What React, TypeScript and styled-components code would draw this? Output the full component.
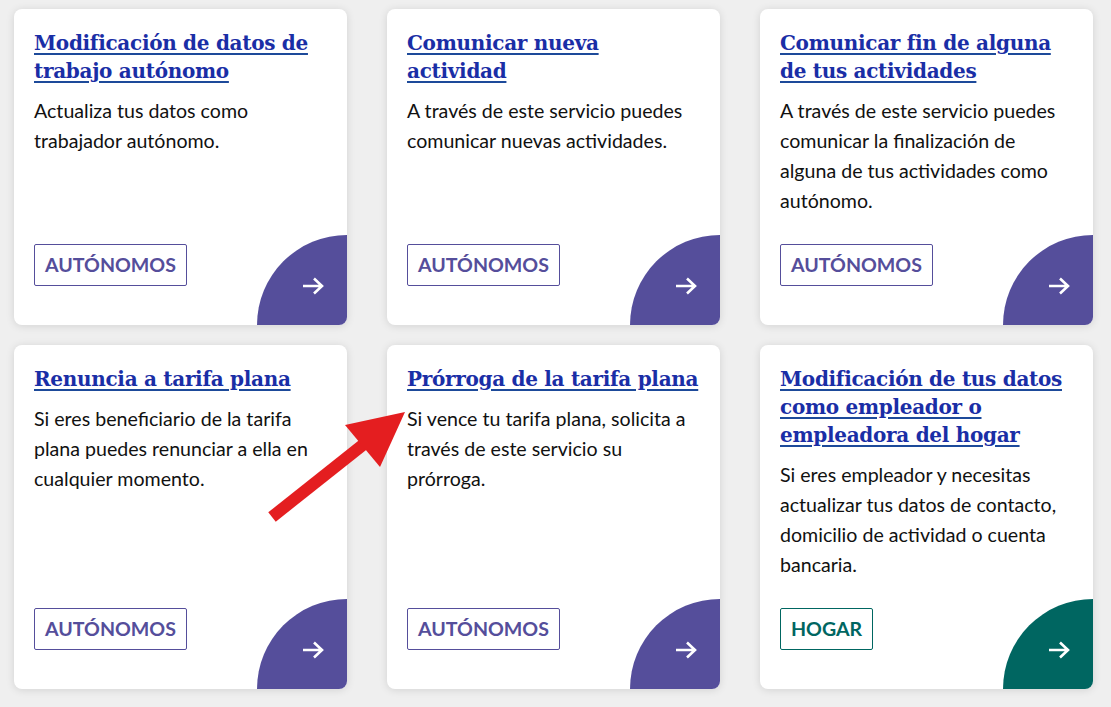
import styled, { createGlobalStyle } from 'styled-components';

const GlobalStyle = createGlobalStyle`
  html, body {
    margin: 0;
    padding: 0;
    background: #efefef;
    overflow: hidden;
  }
  body {
    font-family: Lato, "Noto Sans", sans-serif;
  }
`;

const Page = styled.div`
  position: relative;
  width: 1111px;
  height: 707px;
  overflow: hidden;
`;

const Grid = styled.div`
  display: grid;
  grid-template-columns: repeat(3, 333px);
  column-gap: 40px;
  row-gap: 20px;
  padding: 9px 14px;
`;

const Card = styled.div`
  position: relative;
  display: flex;
  flex-direction: column;
  background: #fff;
  border-radius: 8px;
  box-shadow: 0 1px 8px rgba(0, 0, 0, 0.12);
  padding: 20px 20px 39px 20px;
  overflow: hidden;
`;

const Title = styled.a`
  font-family: "DejaVu Serif", "Liberation Serif", serif;
  font-weight: bold;
  font-size: 20px;
  line-height: 28px;
  color: #1a2ea6;
  text-decoration: underline;
  text-decoration-color: #1d4a9a;
  text-decoration-thickness: 2px;
  text-underline-offset: 3px;
  letter-spacing: -0.3px;
`;

const Description = styled.p`
  flex: 1;
  margin: 11px 0 0 0;
  font-size: 19.6px;
  line-height: 30px;
  color: #111;
`;

const Tag = styled.span<{ $color: string }>`
  align-self: flex-start;
  margin-top: 28px;
  padding: 8px 10px;
  border: 1px solid ${(p) => p.$color};
  border-radius: 2px;
  color: ${(p) => p.$color};
  font-weight: bold;
  font-size: 19.6px;
  line-height: 24px;
`;

const Corner = styled.div<{ $color: string }>`
  position: absolute;
  right: 0;
  bottom: 0;
  width: 90px;
  height: 90px;
  background: ${(p) => p.$color};
  border-top-left-radius: 90px;
  display: flex;
  align-items: flex-end;
  justify-content: flex-end;
  padding: 0 23px 30px 0;
  box-sizing: border-box;
`;

const Overlay = styled.svg`
  position: absolute;
  left: 0;
  top: 0;
  pointer-events: none;
`;

const PURPLE = '#554e9b';
const GREEN = '#006661';

const cards = [
  {
    title: 'Modificación de datos de trabajo autónomo',
    text: 'Actualiza tus datos como trabajador autónomo.',
    tag: 'AUTÓNOMOS',
    color: PURPLE,
  },
  {
    title: 'Comunicar nueva actividad',
    text: 'A través de este servicio puedes comunicar nuevas actividades.',
    tag: 'AUTÓNOMOS',
    color: PURPLE,
  },
  {
    title: 'Comunicar fin de alguna de tus actividades',
    text: 'A través de este servicio puedes comunicar la finalización de alguna de tus actividades como autónomo.',
    tag: 'AUTÓNOMOS',
    color: PURPLE,
  },
  {
    title: 'Renuncia a tarifa plana',
    text: 'Si eres beneficiario de la tarifa plana puedes renunciar a ella en cualquier momento.',
    tag: 'AUTÓNOMOS',
    color: PURPLE,
  },
  {
    title: 'Prórroga de la tarifa plana',
    text: 'Si vence tu tarifa plana, solicita a través de este servicio su prórroga.',
    tag: 'AUTÓNOMOS',
    color: PURPLE,
  },
  {
    title: 'Modificación de tus datos como empleador o empleadora del hogar',
    text: 'Si eres empleador y necesitas actualizar tus datos de contacto, domicilio de actividad o cuenta bancaria.',
    tag: 'HOGAR',
    color: GREEN,
  },
];

const ArrowIcon = () => (
  <svg width="22" height="18" viewBox="0 0 22 18" fill="none" stroke="#fff" strokeWidth="2.6">
    <path d="M1 9h19M12 1.5l8 7.5-8 7.5" />
  </svg>
);

const App = () => (
  <Page>
    <GlobalStyle />
    <Grid>
      {cards.map((c) => (
        <Card key={c.title}>
          <div>
            <Title href="#">{c.title}</Title>
          </div>
          <Description>{c.text}</Description>
          <Tag $color={c.color}>{c.tag}</Tag>
          <Corner $color={c.color}>
            <ArrowIcon />
          </Corner>
        </Card>
      ))}
    </Grid>
    <Overlay width="1111" height="707">
      <line x1="272" y1="517" x2="364" y2="444" stroke="#e41e20" strokeWidth="12" />
      <polygon points="405,412 345,425 380,467" fill="#e41e20" />
    </Overlay>
  </Page>
);

export default App;
